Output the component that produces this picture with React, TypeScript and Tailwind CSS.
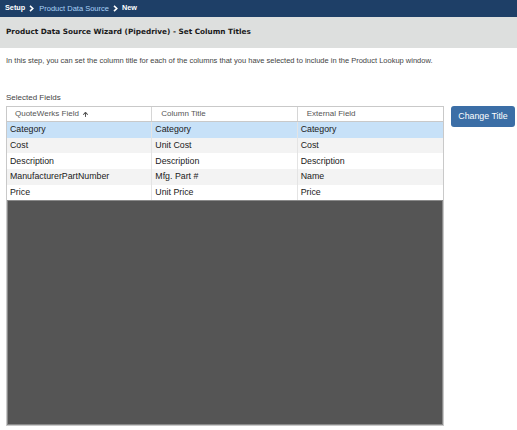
import { ArrowUp } from "lucide-react";

const rows = [
  ["Category", "Category", "Category"],
  ["Cost", "Unit Cost", "Cost"],
  ["Description", "Description", "Description"],
  ["ManufacturerPartNumber", "Mfg. Part #", "Name"],
  ["Price", "Unit Price", "Price"],
];

function Chevron() {
  return (
    <svg width="5" height="7" viewBox="0 0 5 7" className="mx-[4px]">
      <path d="M1 0.8 L3.8 3.5 L1 6.2" fill="none" stroke="white" strokeWidth="1.6" />
    </svg>
  );
}

export default function App() {
  return (
    <div className="w-[517px] h-[430px] bg-white overflow-hidden text-[#333]" style={{ fontFamily: '"Liberation Sans", Arial, sans-serif' }}>
      {/* Breadcrumb bar */}
      <div className="h-[17px] bg-[#1e3f67] flex items-center pl-[5px] text-[7.3px] text-white">
        <span className="font-bold">Setup</span>
        <Chevron />
        <span className="text-[#a9d2f7] text-[7.5px] ml-[1px]">Product Data Source</span>
        <Chevron />
        <span className="font-bold">New</span>
      </div>

      {/* Wizard title */}
      <div className="h-[31px] bg-[#dddfde] flex items-center px-[6px]">
        <h1 className="text-[7.3px] font-bold text-[#1a1a1a]" style={{ fontFamily: '"DejaVu Sans", Verdana, sans-serif' }}>
          Product Data Source Wizard (Pipedrive) - Set Column Titles
        </h1>
      </div>

      <p className="px-[6px] mt-[7px] text-[7.5px] text-[#444]">
        In this step, you can set the column title for each of the columns that you have selected to include in the Product Lookup window.
      </p>

      <div className="px-[6px] mt-[26px] text-[8px] text-[#444]">Selected Fields</div>

      <div className="flex px-[6px] mt-[2px] gap-[7px]">
        <div className="w-[438px] shrink-0 h-[320px] flex flex-col border border-[#c9c9c9]">
          <div className="grid grid-cols-3 h-[15px] border-b border-[#c9c9c9] text-[8px] text-[#555]">
            <div className="flex items-center gap-[3px] pl-[8px] border-r border-[#d6d6d6]">
              QuoteWerks Field <ArrowUp size={7} strokeWidth={3.5} />
            </div>
            <div className="flex items-center pl-[9px] border-r border-[#d6d6d6]">Column Title</div>
            <div className="flex items-center pl-[9px]">External Field</div>
          </div>
          {rows.map((r, i) => (
            <div
              key={r[0]}
              className={
                "grid grid-cols-3 h-[15.6px] text-[8.8px] text-[#1a1a1a] " +
                (i === 0 ? "bg-[#c7e1f8]" : i % 2 === 1 ? "bg-[#f3f3f3]" : "bg-white")
              }
            >
              {r.map((c, j) => (
                <div key={j} className={"flex items-center pl-[3px] " + (j < 2 ? "border-r border-[#e4e4e4]" : "")}>
                  {c}
                </div>
              ))}
            </div>
          ))}
          <div className="flex-1 bg-[#555555] border border-[#8a8a8a]" />
        </div>
        <button className="w-[64px] shrink-0 h-[21px] whitespace-nowrap rounded-[3px] bg-[#3b6ea6] text-white text-[8.8px]">Change Title</button>
      </div>
    </div>
  );
}
